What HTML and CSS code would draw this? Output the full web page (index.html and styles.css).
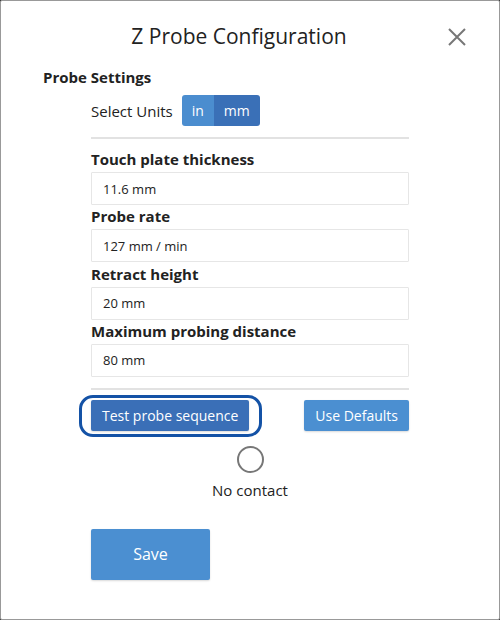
FILE: index.html
```html
<!DOCTYPE html>
<html lang="en">
<head>
    <meta charset="UTF-8">
    <meta name="viewport" content="width=device-width, initial-scale=1.0">
    <title>Z Probe Configuration</title>
    <link rel="stylesheet" href="styles.css">
</head>
<body>
    <div class="modal">
        <!-- Header -->
        <div class="modal-header">
            <h1 class="modal-title">Z Probe Configuration</h1>
            <button class="close-btn" aria-label="Close">
                <svg width="20" height="20" viewBox="0 0 20 20">
                    <path d="M2 2 L18 18 M18 2 L2 18" stroke="#777" stroke-width="2" fill="none"/>
                </svg>
            </button>
        </div>

        <h2 class="section-title">Probe Settings</h2>

        <div class="content">
            <div class="units-row">
                <span>Select Units</span>
                <div class="btn-group">
                    <button class="unit-btn">in</button>
                    <button class="unit-btn active">mm</button>
                </div>
            </div>

            <hr class="divider">

            <label class="field-label">Touch plate thickness</label>
            <input class="field-input" type="text" value="11.6 mm">

            <label class="field-label">Probe rate</label>
            <input class="field-input" type="text" value="127 mm / min">

            <label class="field-label">Retract height</label>
            <input class="field-input" type="text" value="20 mm">

            <label class="field-label">Maximum probing distance</label>
            <input class="field-input" type="text" value="80 mm">

            <hr class="divider">

            <div class="actions-row">
                <button class="btn btn-dark focused">Test probe sequence</button>
                <button class="btn btn-light">Use Defaults</button>
            </div>

            <div class="contact">
                <div class="contact-dot"></div>
                <p>No contact</p>
            </div>

            <button class="btn btn-light save-btn">Save</button>
        </div>
    </div>
</body>
</html>
```

FILE: styles.css
```css
body {
    font-family: "Open Sans", Lato, sans-serif;
    margin: 0;
    background-color: #333;
    color: #222;
}
.modal {
    box-sizing: border-box;
    width: 500px;
    height: 620px;
    background-color: #fff;
    border: 1px solid #999;
    border-radius: 2px;
}
.modal-header {
    display: flex;
    align-items: center;
    padding: 18px 22px 0 40px;
    height: 34px;
}
.modal-title {
    flex: 1;
    margin: 0;
    text-align: center;
    font-size: 21px;
    font-weight: 400;
    color: #222;
}
.close-btn {
    background: none;
    border: none;
    padding: 0;
    width: 40px;
    height: 40px;
    display: flex;
    align-items: center;
    justify-content: center;
    margin-top: 2px;
}
.section-title {
    margin: 14px 0 0 42px;
    font-size: 15px;
    font-weight: 700;
    line-height: 20px;
}
.content {
    margin: 0 90px 0 90px;
}
.units-row {
    display: flex;
    align-items: center;
    gap: 9px;
    margin-top: 8px;
    font-size: 15px;
}
.btn-group {
    display: flex;
    border-radius: 3px;
    overflow: hidden;
}
.unit-btn {
    font-family: inherit;
    font-size: 14px;
    color: #fff;
    border: none;
    height: 31px;
    width: 32px;
    padding: 0;
    background-color: #4b8dcf;
}
.unit-btn.active {
    background-color: #3a70b7;
    width: 46px;
}
.divider {
    border: none;
    height: 2px;
    background-color: #e2e2e2;
    margin: 11px 0 9px 0;
}
.field-label {
    display: block;
    font-size: 15px;
    font-weight: 700;
    line-height: 22px;
}
.field-input {
    display: block;
    box-sizing: border-box;
    width: 100%;
    height: 33px;
    margin: 2px 0 0.33px 0;
    padding: 0 11px;
    font-family: inherit;
    font-size: 13px;
    color: #222;
    border: 1px solid #e6e6e6;
    border-radius: 1px;
}
.actions-row {
    display: flex;
    justify-content: space-between;
    margin-top: 10px;
}
.btn {
    font-family: inherit;
    color: #fff;
    border: none;
    border-radius: 2px;
    font-size: 14px;
    height: 31px;
    padding: 0 11px;
    box-shadow: 0 1px 2px rgba(0, 0, 0, 0.15);
}
.btn-dark {
    background-color: #3a6fb7;
}
.btn-light {
    background-color: #4b8fd1;
}
.focused {
    position: relative;
}
/* focus ring drawn around the active button */
.focused::after {
    content: "";
    position: absolute;
    top: -5px;
    bottom: -6px;
    left: -12px;
    right: -13px;
    border: 3px solid #1452a6;
    border-radius: 14px;
}
.contact {
    display: flex;
    flex-direction: column;
    align-items: center;
    margin-top: 15px;
}
.contact-dot {
    box-sizing: border-box;
    width: 27px;
    height: 27px;
    border: 2px solid #777;
    border-radius: 50%;
}
.contact p {
    margin: 7px 0 0 0;
    font-size: 15px;
}
.save-btn {
    margin-top: 29px;
    width: 119px;
    height: 51px;
    font-size: 16px;
}
```
